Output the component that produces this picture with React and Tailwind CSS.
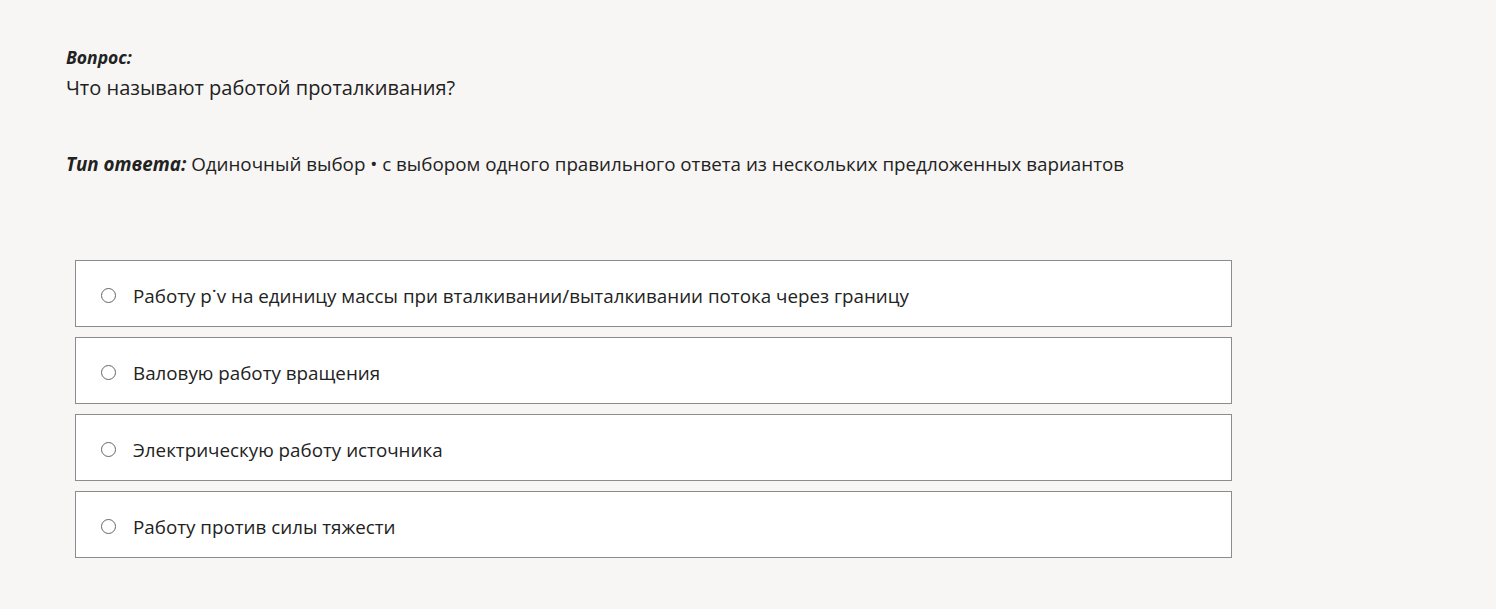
import React from 'react';

const OPTIONS = [
  <>Работу p<span className="align-[0.3em] leading-[0]">·</span>v на единицу массы при вталкивании/выталкивании потока через границу</>,
  'Валовую работу вращения',
  'Электрическую работу источника',
  'Работу против силы тяжести',
];

const App = () => {
  return (
    <div className="min-h-[609px] bg-[#f7f6f4] text-[#222] px-[66px] pt-[45px]" style={{ fontFamily: '"Open Sans", "Noto Sans", sans-serif' }}>
      <p className="text-[17.5px] font-bold italic leading-[24px]">Вопрос:</p>
      <p className="text-[20px] leading-[30px] mt-[4px]">Что называют работой проталкивания?</p>
      <p className="text-[18.8px] leading-[26px] mt-[48px]"><span className="font-bold italic">Тип ответа:</span> Одиночный выбор • с выбором одного правильного ответа из нескольких предложенных вариантов</p>
      <div className="mt-[83px] ml-[9px] w-[1157px] flex flex-col gap-[10px]">
        {OPTIONS.map((o, i) => (
          <label key={i} className="flex items-center h-[67px] bg-white border border-[#8c8c8c] pl-[25px] pt-[4px]">
            <span className="w-[15px] h-[15px] rounded-full border border-[#666] bg-white shrink-0"></span>
            <span className="ml-[17px] text-[18.8px] leading-[26px]">{o}</span>
          </label>
        ))}
      </div>
    </div>
  );
};

export default App;
